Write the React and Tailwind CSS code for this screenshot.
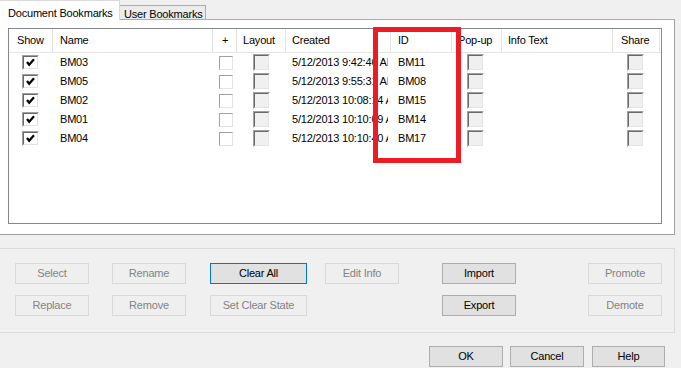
import React from "react";

const rows = [
  ["BM03", "5/12/2013 9:42:46 AM", "BM11"],
  ["BM05", "5/12/2013 9:55:31 AM", "BM08"],
  ["BM02", "5/12/2013 10:08:14 AM", "BM15"],
  ["BM01", "5/12/2013 10:10:09 AM", "BM14"],
  ["BM04", "5/12/2013 10:10:40 AM", "BM17"],
];

function CheckedBox() {
  return (
    <div className="w-[17px] h-[15px] border-t border-l border-[#a0a0a0] border-r-white border-b-white border-r border-b">
      <div className="w-full h-full border-t border-l border-[#696969] border-r border-b border-r-[#e3e3e3] border-b-[#e3e3e3] bg-white flex items-center justify-center">
        <svg width="9" height="9" viewBox="0 0 9 9">
          <path d="M1 4 L3.2 6.8 L8 1.2" stroke="#000" strokeWidth="2.2" fill="none" />
        </svg>
      </div>
    </div>
  );
}

function FlatBox() {
  return (
    <div className="w-[14px] h-[14px] border border-t-[#a0a0a0] border-l-[#a0a0a0] border-r-[#e3e3e3] border-b-[#e3e3e3] bg-white" />
  );
}

function GreyBox() {
  return (
    <div className="w-[17px] h-[17px] border-t border-l border-[#a0a0a0] border-r border-b border-r-white border-b-white">
      <div className="w-full h-full border-t border-l border-[#696969] border-r border-b border-r-[#e3e3e3] border-b-[#e3e3e3] bg-[#f0f0f0]" />
    </div>
  );
}

function Btn({ children, disabled, def, w = "w-[74px]", className = "" }) {
  const base = "h-[21px] flex items-center justify-center border text-[11px] leading-none whitespace-nowrap";
  const st = disabled
    ? "border-[#d9d9d9] bg-[#efefef] text-[#838383]"
    : def
    ? "border-[#0078d7] bg-[#e1e1e1] text-black"
    : "border-[#adadad] bg-[#e1e1e1] text-black";
  return <div className={`${base} ${st} ${w} ${className}`}>{children}</div>;
}

const hcell = "h-full flex items-center border-r border-[#e5e5e5] whitespace-nowrap overflow-hidden";

export default function App() {
  return (
    <div className="relative w-[681px] h-[368px] bg-[#f0f0f0] overflow-hidden text-[11px] tracking-[-0.2px] text-black font-['Liberation_Sans',Arial,sans-serif]">
      {/* Tabs */}
      <div className="flex items-end h-[20px] w-[675px]">
        <div className="w-[120px] h-[20px] bg-white border-t border-r border-[#d9d9d9] pl-[8px] pt-[5px] leading-[14px] whitespace-nowrap">
          Document Bookmarks
        </div>
        <div className="w-[86px] h-[15px] bg-[#ececec] border-t border-r border-b border-[#acacac] pl-[4px] pt-[1px] leading-[14px] whitespace-nowrap overflow-hidden">
          User Bookmarks
        </div>
        <div className="flex-1 h-[15px] border-b border-[#acacac]" />
      </div>

      {/* Panel */}
      <div className="w-[675px] h-[215px] bg-white border-r border-b border-[#a0a0a0] pl-[8px] pt-[8px]">
        <div className="w-[654px] h-[196px] border border-[#828790] bg-white">
          {/* header */}
          <div className="flex h-[24px] border-b border-[#e5e5e5]">
            <div className={`${hcell} w-[44px] pl-[8px]`}>Show</div>
            <div className={`${hcell} w-[160px] pl-[7px]`}>Name</div>
            <div className={`${hcell} w-[24px] pl-[9px]`}>+</div>
            <div className={`${hcell} w-[49px] pl-[6px]`}>Layout</div>
            <div className={`${hcell} w-[105px] pl-[6px]`}>Created</div>
            <div className={`${hcell} w-[61px] pl-[7px]`}>ID</div>
            <div className={`${hcell} w-[50px] pl-[6px]`}>Pop-up</div>
            <div className={`${hcell} w-[111px] pl-[6px]`}>Info Text</div>
            <div className={`${hcell} w-[47px] pl-[8px]`}>Share</div>
          </div>
          {rows.map(([name, created, id]) => (
            <div key={name} className="flex h-[19px] items-center">
              <div className="w-[44px] pl-[13px] flex items-center"><CheckedBox /></div>
              <div className="w-[160px] pl-[7px] whitespace-nowrap">{name}</div>
              <div className="w-[24px] pl-[6px] flex items-center"><FlatBox /></div>
              <div className="w-[49px] pl-[16px] flex items-center"><GreyBox /></div>
              <div className="w-[102px] mr-[3px] pl-[6px] whitespace-nowrap overflow-hidden">{created}</div>
              <div className="w-[61px] pl-[7px] whitespace-nowrap">{id}</div>
              <div className="w-[50px] pl-[15px] flex items-center"><GreyBox /></div>
              <div className="w-[111px]" />
              <div className="w-[47px] pl-[14px] flex items-center"><GreyBox /></div>
            </div>
          ))}
        </div>
      </div>

      {/* Group box */}
      <div className="mt-[13px] w-[675px] h-[85px] border-t border-r border-b border-[#dcdcdc] pt-[14px] pl-[15px] flex flex-col gap-[11px]">
        <div className="flex">
          <Btn disabled>Select</Btn>
          <Btn disabled className="ml-[23px]">Rename</Btn>
          <Btn def w="w-[97px]" className="ml-[24px]">Clear All</Btn>
          <Btn disabled className="ml-[18px]">Edit Info</Btn>
          <Btn className="ml-[43px]">Import</Btn>
          <Btn disabled className="ml-[72px]">Promote</Btn>
        </div>
        <div className="flex">
          <Btn disabled>Replace</Btn>
          <Btn disabled className="ml-[23px]">Remove</Btn>
          <Btn disabled w="w-[97px]" className="ml-[24px]">Set Clear State</Btn>
          <div className="w-[74px] ml-[18px]" />
          <Btn className="ml-[43px]">Export</Btn>
          <Btn disabled className="ml-[72px]">Demote</Btn>
        </div>
      </div>

      {/* Dialog buttons */}
      <div className="mt-[13px] flex pl-[429px]">
        <Btn>OK</Btn>
        <Btn className="ml-[7px]">Cancel</Btn>
        <Btn w="w-[73px]" className="ml-[8px]">Help</Btn>
      </div>

      {/* Red annotation */}
      <div className="absolute left-[373px] top-[27px] w-[88px] h-[136px] border-[5px] border-[#ed1c24]" />
    </div>
  );
}
